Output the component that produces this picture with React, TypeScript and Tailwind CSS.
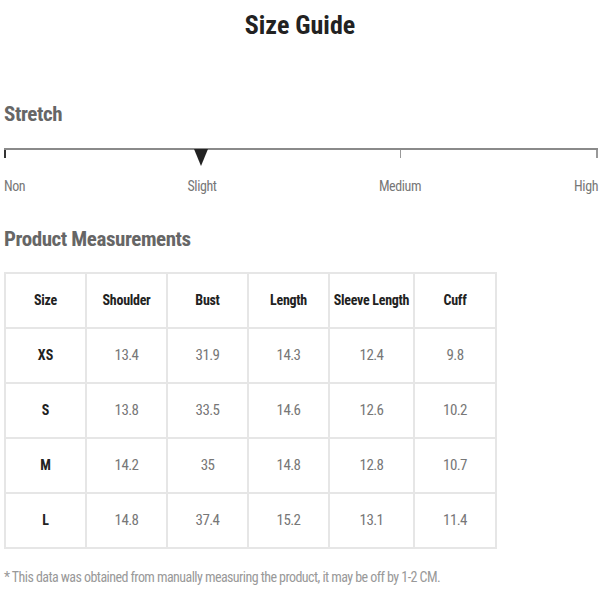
const headers = ["Size", "Shoulder", "Bust", "Length", "Sleeve Length", "Cuff"];
const rows = [
  ["XS", "13.4", "31.9", "14.3", "12.4", "9.8"],
  ["S", "13.8", "33.5", "14.6", "12.6", "10.2"],
  ["M", "14.2", "35", "14.8", "12.8", "10.7"],
  ["L", "14.8", "37.4", "15.2", "13.1", "11.4"],
];

export default function App() {
  return (
    <div className="w-[600px] h-[600px] bg-white px-[4px] font-['Roboto_Condensed','Liberation_Sans',sans-serif] overflow-hidden">
      <div className="h-[50px] flex items-center justify-center">
        <h1 className="text-[26px] font-bold text-[#222] leading-none">Size Guide</h1>
      </div>

      <h2 className="mt-[50px] leading-[28px] text-[21px] tracking-[-0.02em] font-bold text-[#666]">Stretch</h2>

      <div className="relative mt-[20px] w-[594px]">
        <div className="h-[10px] border-t-2 border-[#8a8a8a] grid grid-cols-[396px_198px]">
          <div className="border-l-2 border-[#333]" />
          <div className="border-l border-r-2 border-[#999]" />
        </div>
        <div className="absolute left-[190px] top-[1px] w-0 h-0 border-l-[7px] border-r-[7px] border-t-[17px] border-l-transparent border-r-transparent border-t-[#222]" />
      </div>

      <div className="mt-[18px] w-[594px] grid grid-cols-[99px_198px_198px_99px] text-[14px] tracking-[-0.03em] leading-[20px] text-[#777]">
        <span className="text-left">Non</span>
        <span className="text-center">Slight</span>
        <span className="text-center">Medium</span>
        <span className="text-right">High</span>
      </div>

      <h2 className="mt-[29px] leading-[28px] text-[21px] tracking-[-0.02em] font-bold text-[#666]">Product Measurements</h2>

      <table className="mt-[19px] border-collapse border-2 border-[#e6e6e6] text-center">
        <colgroup>
          <col className="w-[81px]" />
          <col className="w-[81px]" />
          <col className="w-[81px]" />
          <col className="w-[81px]" />
          <col className="w-[85px]" />
          <col className="w-[82px]" />
        </colgroup>
        <thead>
          <tr className="h-[55px]">
            {headers.map((h) => (
              <th key={h} className="border-2 border-[#e6e6e6] p-0 text-[14px] tracking-[-0.02em] whitespace-nowrap font-bold text-[#222]">
                {h}
              </th>
            ))}
          </tr>
        </thead>
        <tbody>
          {rows.map((r) => (
            <tr key={r[0]} className="h-[55px]">
              {r.map((c, i) => (
                <td
                  key={i}
                  className={
                    i === 0
                      ? "border-2 border-[#e6e6e6] p-0 text-[14px] font-bold text-[#222]"
                      : "border-2 border-[#e6e6e6] p-0 text-[15px] tracking-[-0.04em] text-[#777]"
                  }
                >
                  {c}
                </td>
              ))}
            </tr>
          ))}
        </tbody>
      </table>

      <p className="mt-[18px] text-[14px] tracking-[-0.04em] leading-[20px] text-[#999] whitespace-nowrap">
        * This data was obtained from manually measuring the product, it may be off by 1-2 CM.
      </p>
    </div>
  );
}
